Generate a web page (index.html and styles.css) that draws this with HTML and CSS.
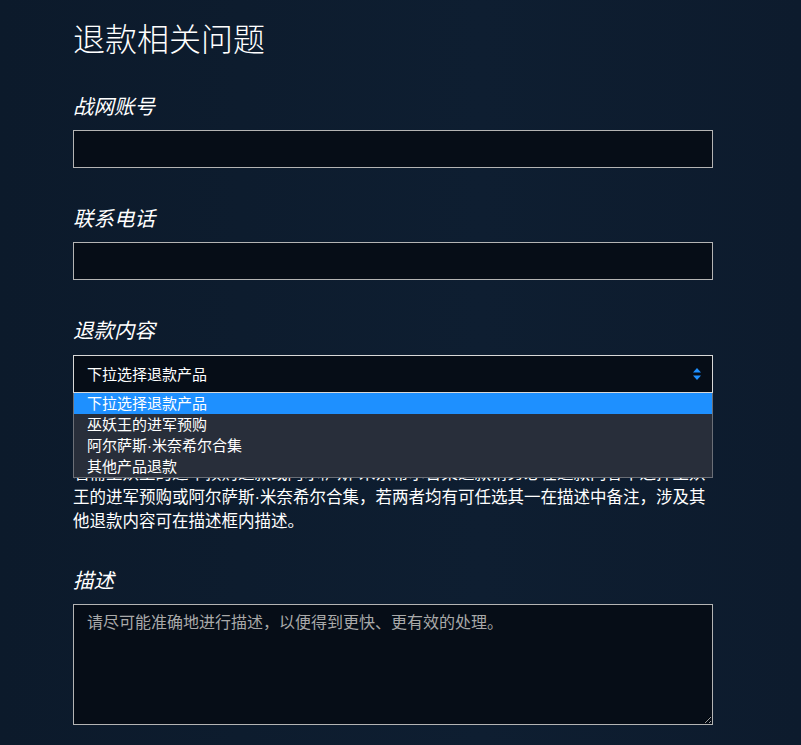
FILE: index.html
```html
<!DOCTYPE html>
<html lang="zh-CN">
<head>
  <meta charset="UTF-8">
  <meta name="viewport" content="width=device-width, initial-scale=1.0">
  <title>退款相关问题</title>
  <link rel="stylesheet" href="styles.css">
</head>
<body>
  <div class="page">
    <h1>退款相关问题</h1>

    <div class="field">
      <label for="account">战网账号</label>
      <input type="text" id="account">
    </div>

    <div class="field">
      <label for="phone">联系电话</label>
      <input type="text" id="phone">
    </div>

    <div class="field field-select">
      <label for="product">退款内容</label>
      <div class="select-wrap">
        <select id="product">
          <option>下拉选择退款产品</option>
          <option>巫妖王的进军预购</option>
          <option>阿尔萨斯·米奈希尔合集</option>
          <option>其他产品退款</option>
        </select>
        <svg class="select-arrow" width="10" height="14" viewBox="0 0 10 14">
          <path d="M5 1 L9 5.5 H1 Z" fill="#1e90ff"/>
          <path d="M5 13 L9 8.5 H1 Z" fill="#1e90ff"/>
        </svg>
        <ul class="dropdown">
          <li class="active">下拉选择退款产品</li>
          <li>巫妖王的进军预购</li>
          <li>阿尔萨斯·米奈希尔合集</li>
          <li>其他产品退款</li>
        </ul>
      </div>
      <p class="hint">若需巫妖王的进军预购退款或阿尔萨斯·米奈希尔合集退款请务必在退款内容中选择巫妖王的进军预购或阿尔萨斯·米奈希尔合集，若两者均有可任选其一在描述中备注，涉及其他退款内容可在描述框内描述。</p>
    </div>

    <div class="field">
      <label for="desc">描述</label>
      <textarea id="desc" placeholder="请尽可能准确地进行描述，以便得到更快、更有效的处理。"></textarea>
    </div>
  </div>
</body>
</html>
```

FILE: styles.css
```css
body {
  margin: 0;
  background: linear-gradient(90deg, #0c1a2b 0%, #0e1e31 60%, #0d1b2d 100%);
  color: #fff;
  font-family: "Liberation Sans", "Noto Sans CJK SC", sans-serif;
}
.page {
  width: 640px;
  margin-left: 73px;
  padding-top: 20px;
}
h1 {
  margin: 0 0 33px;
  font-size: 32px;
  line-height: 40px;
  font-weight: 300;
}
.field {
  margin-bottom: 37px;
}
.field label {
  display: block;
  font-size: 20.5px;
  line-height: 28px;
  font-style: italic;
  margin-bottom: 9px;
}
input[type="text"], select, textarea {
  display: block;
  box-sizing: border-box;
  width: 100%;
  background-color: #060d17; /* тёмные поля */
  border: 1px solid #b4b4b4;
  color: #fff;
  font-family: inherit;
  font-size: 15px;
  margin: 0;
}
input[type="text"] {
  height: 38px;
  padding: 0 13px;
}
.select-wrap {
  position: relative;
  margin-top: 10px;
}
select {
  height: 38px;
  padding: 0 13px;
  appearance: none;
  -webkit-appearance: none;
  border-color: #d8d8d8;
}
.select-arrow {
  position: absolute;
  right: 11px;
  top: 12px;
}
.dropdown {
  position: absolute;
  left: 0;
  right: 0;
  top: 38px;
  margin: 0;
  padding: 0;
  list-style: none;
  background-color: #282e3a;
  border: 1px solid #6b6f77;
  border-top: none;
  z-index: 2;
}
.dropdown li {
  height: 21px;
  line-height: 21px;
  padding: 0 13px;
  font-size: 15px;
}
.dropdown li.active {
  background-color: #1e90ff;
}
.hint {
  margin: 68px 0 0;
  font-size: 16.5px;
  line-height: 24px;
}
.field-select {
  margin-bottom: 34px;
}
textarea {
  height: 121px;
  padding: 7px 13px;
  font-size: 16px;
  line-height: 22px;
  resize: vertical;
}
textarea::placeholder {
  color: #a9a9a9;
}
```
